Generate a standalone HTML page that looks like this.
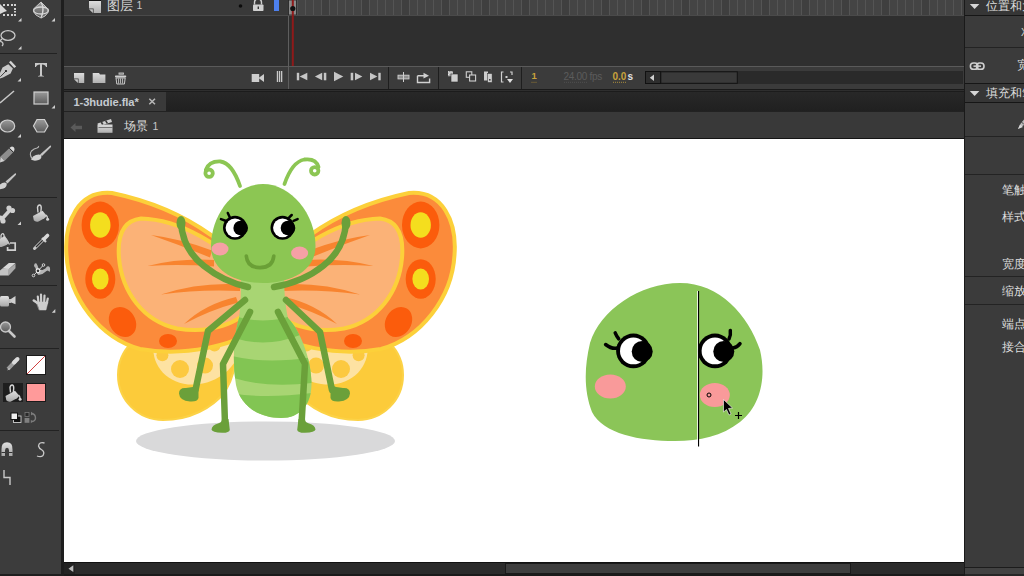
<!DOCTYPE html>
<html><head><meta charset="utf-8">
<style>
*{margin:0;padding:0;box-sizing:border-box}
html,body{width:1024px;height:576px;overflow:hidden;background:#2b2b2b;font-family:"Liberation Sans",sans-serif}
.abs{position:absolute}
.txt{position:absolute;white-space:nowrap;line-height:1}
</style></head><body>
<div class="abs" style="left:0;top:0;width:61px;height:576px;background:#3c3c3c"></div>
<div class="abs" style="left:61px;top:0;width:3px;height:576px;background:#1e1e1e"></div><div class="abs" style="left:0;top:574px;width:61px;height:2px;background:#1e1e1e"></div>
<svg class="abs" style="left:0;top:0" width="61" height="576" viewBox="0 0 61 576">
<defs>
<linearGradient id="ig" x1="0" y1="0" x2="0" y2="1"><stop offset="0" stop-color="#e0e0e0"/><stop offset="1" stop-color="#a8a8a8"/></linearGradient>
<linearGradient id="ig2" x1="0" y1="0" x2="0" y2="1"><stop offset="0" stop-color="#9a9a9a"/><stop offset="1" stop-color="#5c5c5c"/></linearGradient>
</defs>
<g fill="#cfcfcf">
<!-- tiny corner triangles -->
<path d="M21.5,18 L21.5,21.5 L18,21.5Z"/><path d="M55,18 L55,21.5 L51.5,21.5Z"/>
<path d="M21.5,46 L21.5,49.5 L18,49.5Z"/>
<path d="M21,78 L21,81.5 L17.5,81.5Z"/><path d="M55,105 L55,108.5 L51.5,108.5Z"/>
<path d="M21,134 L21,137.5 L17.5,137.5Z"/>
<path d="M21,221.5 L21,225 L17.5,225Z"/><path d="M55.3,309 L55.3,312.8 L51.8,312.8Z"/>
</g>
<!-- separators -->
<rect x="0" y="53" width="57" height="1" fill="#222"/>
<rect x="0" y="197" width="57" height="1" fill="#222"/>
<rect x="0" y="285" width="57" height="1" fill="#222"/>
<rect x="0" y="348" width="59" height="1" fill="#222"/>
<rect x="0" y="430" width="59" height="1" fill="#222"/>
<!-- selection tool -->
<path d="M0,4 L7,11 L4,12 L0,14Z" fill="#d8d8d8"/>
<g fill="#d0d0d0"><rect x="3" y="4" width="2" height="2"/><rect x="7" y="4" width="2" height="2"/><rect x="11" y="4" width="2" height="2"/><rect x="14" y="4" width="2" height="2"/>
<rect x="3" y="14" width="2" height="2"/><rect x="7" y="14" width="2" height="2"/><rect x="11" y="14" width="2" height="2"/><rect x="14" y="14" width="2" height="2"/>
<rect x="14" y="8" width="2" height="2"/><rect x="14" y="11" width="2" height="1.5"/></g>
<!-- 3D rotation -->
<path d="M41,2 L48,9 Q49,13 45,16 L41,18 L36,15 Q33,12 33.5,9Z" fill="url(#ig2)"/>
<ellipse cx="41" cy="10.5" rx="7.5" ry="3.5" fill="none" stroke="#d8d8d8" stroke-width="1.3"/>
<path d="M41,2 Q45,9 41,18" fill="none" stroke="#d8d8d8" stroke-width="1.3"/>
<path d="M41,2 L48,9 Q49,13 45,16 L41,18 L36,15 Q33,12 33.5,9Z" fill="none" stroke="#c8c8c8" stroke-width="1"/>
<!-- lasso -->
<ellipse cx="8" cy="35.5" rx="7" ry="4.8" fill="none" stroke="#c8c8c8" stroke-width="1.3"/>
<path d="M2,39 Q-1,41 2,42 Q4,44 2,46" fill="none" stroke="#c8c8c8" stroke-width="1.3"/>
<!-- pen -->
<path d="M9,62.2 L10.8,60.8 L16.2,66.4 L14.2,68Z" fill="#d4d4d4"/>
<path d="M8.3,64.3 L12.9,68.5 L10.6,73.5 L3,77.5 L0,78.5 V73 L2.5,67.5Z" fill="#c8c8c8"/>
<circle cx="6" cy="71" r="1.1" fill="#1e1e1e"/>
<path d="M6,71 L0.3,76.8" stroke="#1e1e1e" stroke-width="0.8"/>
<!-- T -->
<path d="M35,63 H47 V67 H46 Q45.5,64.5 42,64.5 V75 Q42,75.8 44,76 V76.5 H38 V76 Q40,75.8 40,75 V64.5 Q36.5,64.5 36,67 H35Z" fill="#c8c8c8"/>
<!-- line -->
<path d="M0,103 L14,91" stroke="#c8c8c8" stroke-width="1.5"/>
<!-- rect -->
<rect x="34" y="92" width="14" height="12" fill="url(#ig2)" stroke="#d0d0d0" stroke-width="1.2"/>
<!-- oval -->
<ellipse cx="7.5" cy="126" rx="7.2" ry="6" fill="url(#ig2)" stroke="#d0d0d0" stroke-width="1.2"/>
<!-- polygon -->
<path d="M37,119.5 H44.5 L48,126 L44.5,132 H37 L33.5,126Z" fill="url(#ig2)" stroke="#d0d0d0" stroke-width="1.2"/>
<!-- pencil -->
<path d="M0.5,156.5 L9.5,148 L13.5,152 L4.5,161 Z" fill="#8e8e8e"/>
<path d="M9.5,148 Q11.5,145.5 13.5,147 Q15.5,149 13.5,152Z" fill="#dadada"/>
<path d="M9.3,148.3 L13.3,152.2" stroke="#222" stroke-width="0.9"/>
<path d="M0.5,156.5 L4.5,161 L0,162.5Z" fill="#cfcfcf"/>
<!-- brush curvy -->
<path d="M40,154.5 L50.2,145.6 Q51.5,145.6 51,147 L42,156Z" fill="#c4c4c4"/>
<path d="M33,156.5 Q37.5,153.5 41,155 Q42.5,158.5 38.5,160 Q34,161.5 31,159.5Z" fill="#d0d0d0"/>
<path d="M32,158.5 Q29,154 31.5,151 Q34,148.5 37,148 Q39,147.3 38.5,146" fill="none" stroke="#b4b4b4" stroke-width="1.1"/>
<!-- paint brush -->
<path d="M5.5,181.5 L15.2,173.3 Q16.5,173.3 16,174.7 L7.5,183.5Z" fill="#c4c4c4"/>
<path d="M0,184.5 Q3.5,181.5 6.5,183 Q7.5,186.5 3.5,188.5 L0,189.3Z" fill="#d0d0d0"/>
<!-- bone -->
<path d="M2,219 L10,210" stroke="#cfcfcf" stroke-width="3.5"/>
<circle cx="9" cy="208" r="2.6" fill="#cfcfcf"/><circle cx="12.5" cy="210.5" r="2.6" fill="#cfcfcf"/>
<circle cx="0.5" cy="218" r="2.6" fill="#cfcfcf"/><circle cx="3" cy="221" r="2.6" fill="#cfcfcf"/>
<!-- paint bucket -->
<g id="bkt">
<path d="M33,216 L42.5,210.8 L46.5,215.5 Q46.3,217 44.5,218.3 L38.5,221.5 Q35.5,222.3 33.8,220.3Z" fill="url(#ig)"/>
<path d="M38,212.5 L37.5,207.5 Q38,204.8 39.8,205 Q41.5,205.5 41.2,208.5 L40.8,212.5" fill="none" stroke="#d4d4d4" stroke-width="1.4"/>
<path d="M46,215 Q47.6,216.5 47.5,218.5" fill="none" stroke="#cfcfcf" stroke-width="1.3"/>
<circle cx="47.6" cy="219.3" r="1.5" fill="#d4d4d4"/>
</g>
<!-- ink bottle -->
<path d="M0,238.5 L5,236 L8.8,242.5 Q8,244 6.5,245 L1.5,247 L0,247Z" fill="url(#ig)"/>
<path d="M1,238 L1,235.5 Q1.8,233.2 3.3,233.8 Q4.5,234.8 4,237.5" fill="none" stroke="#d4d4d4" stroke-width="1.3"/>
<path d="M6,238.5 L9.5,244.5" stroke="#c8c8c8" stroke-width="1.4"/>
<path d="M10,243 H15.2 V250.2 H7.6 V247" fill="none" stroke="#d0d0d0" stroke-width="1.7"/>
<!-- eyedropper -->
<path d="M34.5,248.5 L44,239" stroke="#c8c8c8" stroke-width="3" stroke-linecap="round"/>
<path d="M36,247 L44,239" stroke="#2e2e2e" stroke-width="1.2"/>
<path d="M42,238 L46,242" stroke="#cfcfcf" stroke-width="2.2"/>
<path d="M44,239 L47.5,235.5" stroke="#d8d8d8" stroke-width="3.6" stroke-linecap="round"/>
<!-- eraser -->
<path d="M2.3,268.6 L8.8,263 H15.5 L8.8,269.2Z" fill="#d8d8d8"/>
<path d="M0,270.4 L2.3,268.6 H8.8 V275.6 H0Z" fill="#c4c4c4"/>
<path d="M8.8,269.2 L15.5,263.6 V268.3 L8.8,275.6Z" fill="#a8a8a8"/>
<!-- puppet warp -->
<path d="M34,265.5 Q34.5,262.5 36.5,263.5 Q38,266 38.5,268.5 Q40,270 42.5,270 Q46,268.5 47,266.5 Q49.5,265.5 50,268 Q50.5,270.5 49.5,272 Q48,269.5 46.5,271 Q43,274.5 38.5,275 Q36.5,274 36,270 Q35.5,267 34.5,267Z" fill="#b4b4b4"/>
<path d="M33.5,275.5 L43.5,265" stroke="#e8e8e8" stroke-width="0.9"/>
<circle cx="33.5" cy="275.5" r="1.3" fill="#3c3c3c" stroke="#eee" stroke-width="0.8"/>
<circle cx="38" cy="270.8" r="1.9" fill="#333" stroke="#f0f0f0" stroke-width="1.1"/>
<circle cx="43.5" cy="265" r="1.3" fill="#3c3c3c" stroke="#eee" stroke-width="0.8"/>
<!-- camera -->
<rect x="0" y="296" width="9" height="10.5" rx="1.5" fill="url(#ig)"/>
<rect x="8.5" y="299" width="2.5" height="4" fill="#bdbdbd"/>
<path d="M10.5,299.3 L15.5,296 V304.3 L10.5,302.3Z" fill="#cfcfcf"/>
<!-- hand -->
<g fill="#cdcdcd" stroke="#cdcdcd" stroke-linecap="round">
<path d="M37.5,303 L33.8,300.5" stroke-width="2.6"/>
<path d="M38.5,303 L37.8,296.5" stroke-width="2.2"/>
<path d="M41.2,302 L41,294.5" stroke-width="2.2"/>
<path d="M44.2,302 L44.5,295.5" stroke-width="2.2"/>
<path d="M46.8,303 L47.8,298.5" stroke-width="2.2"/>
<path d="M36.5,302 H48 L46,310 H39.5Z" stroke-width="0.5"/>
</g>
<!-- zoom -->
<circle cx="5.5" cy="327" r="5" fill="url(#ig2)" stroke="#c8c8c8" stroke-width="1.3"/>
<path d="M9,331 L14.5,336.5" stroke="#c8c8c8" stroke-width="2.6" stroke-linecap="round"/>
<!-- stroke color -->
<path d="M8,369 L15.5,361" stroke="#9c9c9c" stroke-width="4"/>
<path d="M14,362.5 L17.5,359" stroke="#dcdcdc" stroke-width="4" stroke-linecap="round"/>
<path d="M7,370.5 L9,368 L10,369Z" fill="#d0d0d0"/>
<rect x="26" y="355" width="20" height="20" fill="#1a1a1a"/>
<rect x="27" y="356" width="18" height="18" fill="#fff"/>
<path d="M27,374 L45,356" stroke="#d04040" stroke-width="1"/>
<!-- fill color -->
<rect x="3" y="383" width="20" height="19" fill="#1e1e1e"/>
<use href="#bkt" transform="translate(-27.5,180)"/>
<rect x="26" y="383" width="20" height="19" fill="#1a1a1a"/>
<rect x="27" y="384" width="18" height="17" fill="#ff9a9a"/>
<!-- default / swap -->
<rect x="13.5" y="416" width="7.5" height="6.5" fill="#111" stroke="#cfcfcf" stroke-width="0.9"/>
<rect x="11" y="413" width="6.5" height="6.5" fill="#eee" stroke="#111" stroke-width="1"/>
<rect x="25" y="412.5" width="4" height="4" fill="#2a2a2a" stroke="#777" stroke-width="0.8"/>
<rect x="24.6" y="418" width="4.8" height="4.8" fill="#808080"/>
<path d="M31.5,413.5 Q35.5,414 35.5,418 Q35.5,421 32,421.5" fill="none" stroke="#7c7c7c" stroke-width="1.4"/>
<path d="M31,411.8 L33.5,413.5 L31,415.5Z M30.8,419.8 L33,421.5 L30.8,423.3Z" fill="#7c7c7c"/>
<!-- magnet -->
<path d="M1.5,456 V449.5 Q1.2,442.3 7,442.3 Q12.8,442.3 12.5,449.5 V456 H9 V450.5 Q9,447.8 7,447.8 Q5,447.8 5,450.5 V456Z" fill="url(#ig)"/>
<rect x="1.5" y="452" width="3.5" height="1" fill="#333"/><rect x="9" y="452" width="3.5" height="1" fill="#333"/>
<!-- S -->
<path d="M44.5,443 Q39,441.5 38.5,446 Q39,448.5 42,450 Q45,452 43,455.5 Q41,457.5 37,456" fill="none" stroke="#c8c8c8" stroke-width="1.3"/>
<!-- step -->
<path d="M4,470 V477.5 H10 V485" fill="none" stroke="#c8c8c8" stroke-width="1.4"/>
</svg>
<!-- timeline -->
<div class="abs" style="left:64px;top:0;width:900px;height:89px;background:#2f2f2f"></div>
<div class="abs" style="left:64px;top:0;width:900px;height:15px;background:#393939"></div>

<div class="abs" style="left:64px;top:66px;width:900px;height:1px;background:#5a5a5a"></div>
<div class="abs" style="left:64px;top:67px;width:900px;height:22px;background:#3b3b3b"></div>
<div class="abs" style="left:64px;top:89px;width:900px;height:1px;background:#1a1a1a"></div>
<div class="abs" style="left:64px;top:90px;width:900px;height:1px;background:#2e2e2e"></div><div class="abs" style="left:64px;top:91px;width:900px;height:1px;background:#1c1c1c"></div>
<!-- tab bar -->
<div class="abs" style="left:64px;top:92px;width:900px;height:19px;background:linear-gradient(#282828,#202020)"></div>
<div class="abs" style="left:64px;top:92px;width:102px;height:19px;background:#3a3a3a"></div>
<div class="abs" style="left:64px;top:111px;width:900px;height:1px;background:#222"></div>
<!-- scene bar -->
<div class="abs" style="left:64px;top:112px;width:900px;height:26px;background:#393939"></div>
<div class="abs" style="left:64px;top:138px;width:900px;height:1px;background:#141414"></div>
<!-- stage -->
<div class="abs" style="left:64px;top:139px;width:900px;height:423px;background:#fff"></div>
<!-- bottom scroll -->
<div class="abs" style="left:64px;top:562px;width:900px;height:12px;background:#2b2b2b"></div>
<div class="abs" style="left:64px;top:562px;width:900px;height:1px;background:#121212"></div>
<div class="abs" style="left:64px;top:563px;width:11px;height:11px;background:#232323"></div>
<div class="abs" style="left:64px;top:574px;width:900px;height:2px;background:#1a1a1a"></div>
<div class="abs" style="left:505px;top:563px;width:346px;height:11px;background:#3e3e3e;border:1px solid #1a1a1a"></div>
<svg class="abs" style="left:64px;top:563px" width="12" height="12"><path d="M4.5,5.8 L9.3,2.3 V9.1Z" fill="#bdbdbd"/></svg>
<svg class="abs" style="left:64px;top:139px" width="900" height="423" viewBox="64 139 900 423">
<!-- shadow -->
<ellipse cx="265.5" cy="441" rx="129.5" ry="19.5" fill="#d9d9da"/>
<!-- lower wings -->
<g id="lw">
<path d="M236,345 C222,332 190,330 163,330 C138,330 118,350 118,375 C118,400 138,420 163,420 C190,420 212,408 225,392 C232,380 239,360 236,345Z" fill="#fccb3a" stroke="#fcd246" stroke-width="2"/>
<path d="M240,336 C212,334 176,336 154,342 C150,362 164,382 188,384.5 C212,386 234,372 240,350Z" fill="#fde2a2"/>
<circle cx="180" cy="369" r="9" fill="#fcc940"/>
<circle cx="205" cy="365.6" r="8" fill="#fcc940"/>
<circle cx="162.4" cy="355.2" r="6" fill="#fcc940"/>
<circle cx="214.5" cy="345.6" r="6" fill="#fcc940"/>
</g>
<use href="#lw" transform="translate(521,0) scale(-1,1)"/>
<!-- upper wings -->
<g id="uw">
<path d="M252,300 C240,265 228,248 211,235 C190,220 160,203 112,193 C78,190 64,222 66.5,255 C69,298 100,338 140,349 C185,357 235,345 252,330Z" fill="#fb8b3b" stroke="#fcd03a" stroke-width="4"/>
<path d="M250,274 C238,262 222,248 200,236 C180,225 160,219 141,218.5 C120,221 117.5,240 119,258 C122,292 143,321 177,328.5 C210,334 240,324 252,305Z" fill="#fbb277" stroke="#fcd03a" stroke-width="4"/>
<ellipse cx="100.3" cy="225" rx="18.7" ry="23.4" fill="#fb5c0c"/>
<ellipse cx="100.3" cy="225" rx="10.2" ry="12.7" fill="#f4de1e"/>
<ellipse cx="100.3" cy="279" rx="15" ry="19.8" fill="#fb5c0c"/>
<ellipse cx="100.3" cy="279" rx="8.3" ry="10.5" fill="#f4de1e"/>
<ellipse cx="122.5" cy="322" rx="12.8" ry="15.8" fill="#fb5c0c" transform="rotate(-32 122.5 322)"/>
<ellipse cx="168" cy="341" rx="9" ry="7" fill="#fb5c0c"/>
<g fill="#f8842f">
<path d="M151,235 Q182,239 212,250.5 L210,257.5 Q180,245 151,235Z"/>
<path d="M147.5,266 Q180,258 214,260 L214,266.5 Q180,264 147.5,266Z"/>
<path d="M161,294.5 Q200,282 240,284.5 L240,291 Q200,289 161,294.5Z"/>
<path d="M184,324 Q205,304 236,297 L238,302.5 Q210,310 184,324Z"/>
</g>
</g>
<use href="#uw" transform="translate(521,0) scale(-1,1)"/>
<!-- abdomen -->
<defs><clipPath id="abd"><path d="M241,268 H284 C284,290 285,305 288,318 C300,330 312,360 311.5,385 C311,405 300,418 281,418 C258,418 240,405 236,385 C232,360 234,335 239,318 C241,305 241,290 241,268Z"/></clipPath></defs>
<g clip-path="url(#abd)">
<rect x="220" y="260" width="100" height="170" fill="#a8d573"/>
<path d="M225,313 Q263,328 300,313 L300,335 Q263,350 225,335Z" fill="#82c553"/>
<path d="M225,354 Q263,366 320,356 L320,382 Q263,390 225,375Z" fill="#82c553"/>
<path d="M225,392 Q263,400 320,392 L320,430 H225Z" fill="#82c553"/>
</g>
<!-- legs -->
<g fill="none" stroke="#6ba03a" stroke-width="6.5" stroke-linecap="round" stroke-linejoin="round">
<path d="M245,300 L208,331 L195.5,390"/>
<path d="M250,312 L223,364 L225,424"/>
<path d="M278,312 L305,364 L301.5,424"/>
<path d="M286,300 L320,332 L332,390"/>
<!-- arms -->
<path d="M181,221 Q182,249 204,266 Q224,282 248,287"/>
<path d="M346,221 Q345,249 323,266 Q303,282 274,287"/>
</g>
<g fill="#6ba03a">
<path id="fo" d="M198.5,385 L198.5,398 Q197.5,402 190,401.5 Q179.5,400.5 179,393.5 Q179,387.5 186,388 Q192,388 198.5,385Z"/>
<path id="fi" d="M228.5,419 L229.8,430 Q229,433 222,432.8 Q212,432.5 211.5,429.5 Q212,425 218,423.5 Q222,422.5 222,419Z"/>
<use href="#fo" transform="translate(529,0) scale(-1,1)"/>
<use href="#fi" transform="translate(527,0) scale(-1,1)"/>
<ellipse cx="181" cy="223" rx="4.5" ry="7"/>
<ellipse cx="346" cy="223" rx="4.5" ry="7"/>
</g>
<!-- antennae -->
<g fill="none" stroke="#8cc653" stroke-width="3.8" stroke-linecap="round">
<path d="M240,186 Q232,163 220.5,161.5 Q209,161 205.8,170"/>
<circle cx="209.1" cy="173.2" r="3.7"/>
<path d="M284.5,184 Q292,162 304.3,159.5 Q316,158 318.5,167"/>
<circle cx="314.7" cy="170.8" r="3.7"/>
</g>
<!-- head -->
<path d="M263,184 C291,184 315.5,214 315.5,246 C315.5,270 292,283 263,283 C234,283 211,270 211,246 C211,214 235,184 263,184Z" fill="#8cc653"/>
<!-- eyes -->
<g>
<circle cx="235" cy="227.8" r="12" fill="#000"/>
<circle cx="235" cy="227.8" r="9.4" fill="#fff"/>
<circle cx="240.7" cy="228" r="7.3" fill="#000"/>
<circle cx="282.5" cy="227.8" r="12" fill="#000"/>
<circle cx="282.5" cy="227.8" r="9.4" fill="#fff"/>
<circle cx="288" cy="228" r="7.3" fill="#000"/>
</g>
<g stroke="#000" stroke-width="2.5" stroke-linecap="round" fill="none">
<path d="M230,217.7 L227.8,213"/><path d="M226.8,221.2 L221,219.1"/>
<path d="M289,217.7 L291.7,215"/><path d="M293.5,220.8 L297.6,219.1"/>
</g>
<ellipse cx="220" cy="249" rx="8.5" ry="6.5" fill="#f6a0a5"/>
<ellipse cx="299.6" cy="253" rx="8.5" ry="6.5" fill="#f6a0a5"/>
<path d="M246.3,256 C247,264.5 252.5,267.6 260,267.6 C267.5,267.6 273,264.5 273.8,256" fill="none" stroke="#6a9f36" stroke-width="3.6" stroke-linecap="round"/>

<!-- green blob -->
<path d="M680,283 C720,283 748,315 760,350 C766,375 762,405 740,422 C722,436 700,441 675,441 C640,441 603,434 592,412 C584,392 584,368 590,343 C600,310 640,283 680,283Z" fill="#8bc558"/>
<g>
<circle cx="633.4" cy="350.9" r="17.3" fill="#000"/>
<circle cx="633.4" cy="350.9" r="13.4" fill="#fff"/>
<circle cx="642.2" cy="351.5" r="10.5" fill="#000"/>
<circle cx="715" cy="350.9" r="17.3" fill="#000"/>
<circle cx="715" cy="350.9" r="13.4" fill="#fff"/>
<circle cx="723.8" cy="351.5" r="10.5" fill="#000"/>
</g>
<g stroke="#000" stroke-width="3.5" stroke-linecap="round" fill="none">
<path d="M618.7,338.9 Q616.5,336 615.2,332.8"/><path d="M617.4,348 Q612,349.5 605.6,344.5"/>
<path d="M729,339 Q731,335 730.3,330.5"/><path d="M733,348 Q737,347.5 740,343.6"/>
</g>
<ellipse cx="610.3" cy="386.4" rx="15.5" ry="12" fill="#f99a9a"/>
<ellipse cx="714.8" cy="395" rx="15" ry="12" fill="#f99a9a"/>
<rect x="697" y="291" width="1" height="155.5" fill="#fff" opacity="0.8"/><rect x="698" y="291" width="1.1" height="155.5" fill="#000"/>
<circle cx="709" cy="395" r="2" fill="none" stroke="#000" stroke-width="1"/>
<path d="M723.5,399.5 L723.5,412 L726.5,409.5 L729,415 L731,414 L728.5,408.5 L732.5,408Z" fill="#000" stroke="#fff" stroke-width="0.6"/>
<path d="M735,415.5 H742 M738.5,412 V419" stroke="#000" stroke-width="1.2"/>
</svg>
<svg class="abs" style="left:0;top:0" width="964" height="138" viewBox="0 0 964 138"><defs><linearGradient id="tg" x1="0" y1="0" x2="0" y2="1"><stop offset="0" stop-color="#dcdcdc"/><stop offset="1" stop-color="#b0b0b0"/></linearGradient></defs>
<!-- frames -->
<rect x="288" y="0" width="676" height="15" fill="#444"/>
<rect x="321" y="0" width="8" height="15" fill="#3f3f3f"/><rect x="361" y="0" width="8" height="15" fill="#3f3f3f"/><rect x="401" y="0" width="8" height="15" fill="#3f3f3f"/><rect x="441" y="0" width="8" height="15" fill="#3f3f3f"/><rect x="481" y="0" width="8" height="15" fill="#3f3f3f"/><rect x="521" y="0" width="8" height="15" fill="#3f3f3f"/><rect x="561" y="0" width="8" height="15" fill="#3f3f3f"/><rect x="601" y="0" width="8" height="15" fill="#3f3f3f"/><rect x="641" y="0" width="8" height="15" fill="#3f3f3f"/><rect x="681" y="0" width="8" height="15" fill="#3f3f3f"/><rect x="721" y="0" width="8" height="15" fill="#3f3f3f"/><rect x="761" y="0" width="8" height="15" fill="#3f3f3f"/><rect x="801" y="0" width="8" height="15" fill="#3f3f3f"/><rect x="841" y="0" width="8" height="15" fill="#3f3f3f"/><rect x="881" y="0" width="8" height="15" fill="#3f3f3f"/><rect x="921" y="0" width="8" height="15" fill="#3f3f3f"/><rect x="961" y="0" width="8" height="15" fill="#3f3f3f"/>
<rect x="297" y="0" width="1" height="15" fill="#545454"/><rect x="305" y="0" width="1" height="15" fill="#545454"/><rect x="313" y="0" width="1" height="15" fill="#545454"/><rect x="321" y="0" width="1" height="15" fill="#545454"/><rect x="329" y="0" width="1" height="15" fill="#545454"/><rect x="337" y="0" width="1" height="15" fill="#545454"/><rect x="345" y="0" width="1" height="15" fill="#545454"/><rect x="353" y="0" width="1" height="15" fill="#545454"/><rect x="361" y="0" width="1" height="15" fill="#545454"/><rect x="369" y="0" width="1" height="15" fill="#545454"/><rect x="377" y="0" width="1" height="15" fill="#545454"/><rect x="385" y="0" width="1" height="15" fill="#545454"/><rect x="393" y="0" width="1" height="15" fill="#545454"/><rect x="401" y="0" width="1" height="15" fill="#545454"/><rect x="409" y="0" width="1" height="15" fill="#545454"/><rect x="417" y="0" width="1" height="15" fill="#545454"/><rect x="425" y="0" width="1" height="15" fill="#545454"/><rect x="433" y="0" width="1" height="15" fill="#545454"/><rect x="441" y="0" width="1" height="15" fill="#545454"/><rect x="449" y="0" width="1" height="15" fill="#545454"/><rect x="457" y="0" width="1" height="15" fill="#545454"/><rect x="465" y="0" width="1" height="15" fill="#545454"/><rect x="473" y="0" width="1" height="15" fill="#545454"/><rect x="481" y="0" width="1" height="15" fill="#545454"/><rect x="489" y="0" width="1" height="15" fill="#545454"/><rect x="497" y="0" width="1" height="15" fill="#545454"/><rect x="505" y="0" width="1" height="15" fill="#545454"/><rect x="513" y="0" width="1" height="15" fill="#545454"/><rect x="521" y="0" width="1" height="15" fill="#545454"/><rect x="529" y="0" width="1" height="15" fill="#545454"/><rect x="537" y="0" width="1" height="15" fill="#545454"/><rect x="545" y="0" width="1" height="15" fill="#545454"/><rect x="553" y="0" width="1" height="15" fill="#545454"/><rect x="561" y="0" width="1" height="15" fill="#545454"/><rect x="569" y="0" width="1" height="15" fill="#545454"/><rect x="577" y="0" width="1" height="15" fill="#545454"/><rect x="585" y="0" width="1" height="15" fill="#545454"/><rect x="593" y="0" width="1" height="15" fill="#545454"/><rect x="601" y="0" width="1" height="15" fill="#545454"/><rect x="609" y="0" width="1" height="15" fill="#545454"/><rect x="617" y="0" width="1" height="15" fill="#545454"/><rect x="625" y="0" width="1" height="15" fill="#545454"/><rect x="633" y="0" width="1" height="15" fill="#545454"/><rect x="641" y="0" width="1" height="15" fill="#545454"/><rect x="649" y="0" width="1" height="15" fill="#545454"/><rect x="657" y="0" width="1" height="15" fill="#545454"/><rect x="665" y="0" width="1" height="15" fill="#545454"/><rect x="673" y="0" width="1" height="15" fill="#545454"/><rect x="681" y="0" width="1" height="15" fill="#545454"/><rect x="689" y="0" width="1" height="15" fill="#545454"/><rect x="697" y="0" width="1" height="15" fill="#545454"/><rect x="705" y="0" width="1" height="15" fill="#545454"/><rect x="713" y="0" width="1" height="15" fill="#545454"/><rect x="721" y="0" width="1" height="15" fill="#545454"/><rect x="729" y="0" width="1" height="15" fill="#545454"/><rect x="737" y="0" width="1" height="15" fill="#545454"/><rect x="745" y="0" width="1" height="15" fill="#545454"/><rect x="753" y="0" width="1" height="15" fill="#545454"/><rect x="761" y="0" width="1" height="15" fill="#545454"/><rect x="769" y="0" width="1" height="15" fill="#545454"/><rect x="777" y="0" width="1" height="15" fill="#545454"/><rect x="785" y="0" width="1" height="15" fill="#545454"/><rect x="793" y="0" width="1" height="15" fill="#545454"/><rect x="801" y="0" width="1" height="15" fill="#545454"/><rect x="809" y="0" width="1" height="15" fill="#545454"/><rect x="817" y="0" width="1" height="15" fill="#545454"/><rect x="825" y="0" width="1" height="15" fill="#545454"/><rect x="833" y="0" width="1" height="15" fill="#545454"/><rect x="841" y="0" width="1" height="15" fill="#545454"/><rect x="849" y="0" width="1" height="15" fill="#545454"/><rect x="857" y="0" width="1" height="15" fill="#545454"/><rect x="865" y="0" width="1" height="15" fill="#545454"/><rect x="873" y="0" width="1" height="15" fill="#545454"/><rect x="881" y="0" width="1" height="15" fill="#545454"/><rect x="889" y="0" width="1" height="15" fill="#545454"/><rect x="897" y="0" width="1" height="15" fill="#545454"/><rect x="905" y="0" width="1" height="15" fill="#545454"/><rect x="913" y="0" width="1" height="15" fill="#545454"/><rect x="921" y="0" width="1" height="15" fill="#545454"/><rect x="929" y="0" width="1" height="15" fill="#545454"/><rect x="937" y="0" width="1" height="15" fill="#545454"/><rect x="945" y="0" width="1" height="15" fill="#545454"/><rect x="953" y="0" width="1" height="15" fill="#545454"/><rect x="961" y="0" width="1" height="15" fill="#545454"/><rect x="969" y="0" width="1" height="15" fill="#545454"/>
<rect x="288.5" y="0" width="8" height="15" fill="#8a8a8a" stroke="#222" stroke-width="0.8"/>
<rect x="64" y="15" width="900" height="1" fill="#4a4a4a"/>
<rect x="288" y="16" width="1" height="73" fill="#5e5e5e"/>
<rect x="291.8" y="0" width="2" height="66" fill="#8e1a1a"/>
<circle cx="292.8" cy="8.5" r="2.6" fill="#111"/>
<!-- layer row -->
<path d="M89,1 H101 V13 H93.6 V8.6 H89Z" fill="url(#tg)"/><path d="M89,9.3 H92.9 V13Z" fill="#c4c4c4"/><rect x="89" y="0" width="12" height="1" fill="#111"/>

<circle cx="240.5" cy="6" r="1.8" fill="#0c0c0c"/>
<path d="M254.5,4.5 V2.5 Q254.5,-1 258,-1 Q261.5,-1 261.5,2.5 V4.5" fill="none" stroke="#d0d0d0" stroke-width="1.4"/>
<rect x="253" y="4.5" width="10.5" height="6.5" rx="0.8" fill="#d0d0d0"/>
<rect x="257.6" y="6.5" width="1.4" height="2.5" fill="#333"/>
<rect x="274" y="0" width="5" height="11" fill="#4d80ee"/>
<!-- bottom toolbar icons -->
<path d="M74,73 H84.2 V83.1 H78.6 V78.6 H74Z" fill="url(#tg)"/><path d="M74,79.3 H77.9 V83.1Z" fill="#c4c4c4"/>
<path d="M92.7,73 H99 L100,74.6 H105.4 V83.1 H92.7Z" fill="url(#tg)"/>
<rect x="119" y="73" width="4.5" height="1.2" fill="none" stroke="#c8c8c8" stroke-width="0.9"/>
<rect x="115" y="75.4" width="11.2" height="2" rx="0.6" fill="#cfcfcf"/>
<path d="M116,78 H125.2 L124.4,84 H116.8Z" fill="none" stroke="#c8c8c8" stroke-width="1"/>
<path d="M118.6,78.5 V83.5 M120.6,78.5 V83.5 M122.6,78.5 V83.5" stroke="#c8c8c8" stroke-width="0.9"/>
<!-- camera + ||| -->
<rect x="251.7" y="74" width="7.5" height="8" fill="#cdcdcd"/>
<path d="M258.5,78 L264,74 V82Z" fill="#cdcdcd"/>
<rect x="276.8" y="71" width="1.3" height="11" fill="#c8c8c8"/>
<rect x="278.9" y="71" width="1.3" height="11" fill="#c8c8c8"/>
<rect x="281" y="71" width="1.3" height="11" fill="#c8c8c8"/>
<!-- playback -->
<g fill="#c6c6c6">
<rect x="296.8" y="72.8" width="2.4" height="7.5"/><path d="M299.6,76.5 L307.3,72.8 V80.3Z"/>
<path d="M314.9,76.5 L322.2,72.8 V80.3Z"/><rect x="323.8" y="72.8" width="2.5" height="7.5"/>
<path d="M334,71.8 L343.3,76.5 L334,81.2Z"/>
<rect x="350.7" y="72.8" width="2.5" height="7.5"/><path d="M355,72.8 L362.4,76.5 L355,80.3Z"/>
<path d="M370,72.8 L377.4,76.5 L370,80.3Z"/><rect x="378.3" y="72.8" width="2.4" height="7.5"/>
</g>
<rect x="388" y="67" width="1" height="22" fill="#1e1e1e"/>
<rect x="438" y="67" width="1" height="22" fill="#1e1e1e"/>
<rect x="521" y="67" width="1" height="22" fill="#1e1e1e"/>
<!-- sync / loop -->
<rect x="398" y="75.2" width="11" height="3.7" fill="#8f8f8f" stroke="#d0d0d0" stroke-width="0.9"/>
<rect x="403" y="72" width="1" height="10" fill="#d0d0d0"/>
<path d="M417.5,75.8 H424 M417.5,75.8 V82.5 H429.6 V78.5" fill="none" stroke="#d0d0d0" stroke-width="1.4"/>
<path d="M423.5,72.8 L429,75.8 L423.5,78.5Z" fill="#d0d0d0"/>
<!-- onion skin icons -->
<rect x="448" y="71.3" width="5" height="5" fill="#aaa"/>
<rect x="448" y="71.3" width="1.2" height="1.2" fill="#eee"/><rect x="450.4" y="71.3" width="1.2" height="1.2" fill="#eee"/><rect x="449.2" y="72.5" width="1.2" height="1.2" fill="#eee"/><rect x="448" y="73.7" width="1.2" height="1.2" fill="#eee"/><rect x="451.6" y="72.5" width="1.2" height="1.2" fill="#eee"/>
<rect x="451" y="74" width="7" height="8" fill="#cfcfcf" stroke="#2c2c2c" stroke-width="0.6"/>
<rect x="466.3" y="71.8" width="5.5" height="5.5" fill="none" stroke="#cfcfcf" stroke-width="1.1"/>
<rect x="469.6" y="75" width="6" height="6" fill="#3b3b3b" stroke="#cfcfcf" stroke-width="1.1"/>
<rect x="484" y="71.5" width="4" height="9" fill="#cfcfcf"/>
<rect x="487.6" y="73.5" width="4.5" height="9" fill="#cfcfcf" stroke="#2c2c2c" stroke-width="0.5"/>
<rect x="489" y="79" width="1.6" height="1.6" fill="#444"/>
<path d="M503.5,72 H501.5 V82 H503.5 M510,72 H512 V75" fill="none" stroke="#cfcfcf" stroke-width="1.2"/>
<rect x="505.5" y="76" width="2" height="2" fill="#cfcfcf"/>
<path d="M507,79 H513 L510,83Z" fill="#e0e0e0"/>
<!-- frame number / fps -->
<text x="531.5" y="78.5" font-family="Liberation Sans" font-weight="bold" font-size="9.5" fill="#c8a23c">1</text>
<path d="M531.5,82.3 H536.5" stroke="#b08a30" stroke-width="0.8" stroke-dasharray="1,1"/>
<text x="563.5" y="79.5" font-family="Liberation Sans" font-size="10" fill="#5c5c5c" letter-spacing="-0.3">24.00 fps</text>
<path d="M564,82.3 H588" stroke="#555" stroke-width="0.8" stroke-dasharray="1,1"/>
<text x="612.5" y="79.5" font-family="Liberation Sans" font-weight="bold" font-size="10" fill="#c8a23c">0.0</text>
<text x="627.5" y="79.5" font-family="Liberation Sans" font-weight="bold" font-size="10" fill="#e0e0e0">s</text>
<path d="M613,82.3 H626" stroke="#c8a23c" stroke-width="0.8" stroke-dasharray="1,1"/>
<!-- timeline scroll -->
<rect x="645" y="71" width="318" height="13" fill="#2a2a2a"/>
<rect x="645.5" y="71.5" width="15" height="12" fill="#2e2e2e" stroke="#111" stroke-width="1"/>
<path d="M649.8,77.7 L654,74.5 V81Z" fill="#cfcfcf"/>
<rect x="660.8" y="71.5" width="302" height="12" fill="#2a2a2a"/><rect x="660.8" y="71.8" width="76.5" height="11.5" fill="#3a3a3a" stroke="#121212" stroke-width="1"/>
<!-- tab -->
<text x="73.5" y="106" font-family="Liberation Sans" font-weight="bold" font-size="11.2" fill="#c5cad0" letter-spacing="-0.1">1-3hudie.fla*</text>
<path d="M149.3,98.7 L155,104.3 M155,98.7 L149.3,104.3" stroke="#b8b8b8" stroke-width="1.5"/>
<!-- scene bar -->
<path d="M70.5,127.5 L75.5,123 V125.8 H82 V129.2 H75.5 V132Z" fill="#5a5a5a"/>
<rect x="97.5" y="124.5" width="15" height="8.3" fill="url(#tg)"/>
<path d="M97.5,123.5 L111,119 L112,122 L98.5,126.3Z" fill="#cfcfcf"/>
<path d="M100.5,122.5 L102,121.5 L103.5,124 L102,124.7Z M105,121 L106.5,120.5 L108,123 L106.5,123.5Z" fill="#3a3a3a"/>
<path d="M98.5,127.5 H112.5 M98.5,128" stroke="#3a3a3a" stroke-width="0.6"/>
</svg>
<div class="txt" style="left:107px;top:-1px;font-size:13px;color:#d8d8d8">图层</div>
<div class="txt" style="left:136.5px;top:0px;font-size:10.5px;color:#c8c8c8">1</div>
<div class="txt" style="left:123.5px;top:119.5px;font-size:12px;color:#dcdcdc">场景</div>
<div class="txt" style="left:152.5px;top:121px;font-size:10.5px;color:#c8c8c8">1</div>
<svg class="abs" style="left:963px;top:0" width="61" height="576" viewBox="963 0 61 576">
<rect x="964" y="0" width="1" height="576" fill="#1a1a1a"/>
<rect x="965" y="0" width="59" height="576" fill="#3b3b3b"/>
<rect x="965" y="0" width="59" height="15" fill="#363636"/>
<rect x="965" y="15" width="59" height="1" fill="#161616"/>
<rect x="965" y="47" width="59" height="1" fill="#232323"/>
<rect x="965" y="83" width="59" height="1" fill="#161616"/>
<rect x="965" y="84" width="59" height="18" fill="#363636"/>
<rect x="965" y="102" width="59" height="1" fill="#161616"/>
<rect x="965" y="136" width="59" height="1" fill="#232323"/>
<rect x="965" y="174" width="59" height="1" fill="#232323"/>
<rect x="965" y="276" width="59" height="1" fill="#232323"/>
<rect x="965" y="304" width="59" height="1" fill="#232323"/>
<rect x="965" y="567" width="59" height="1" fill="#1c1c1c"/>
<rect x="965" y="568" width="59" height="6" fill="#424242"/>
<rect x="965" y="574" width="59" height="2" fill="#262626"/>
<path d="M969.8,4 H979.4 L974.6,9Z" fill="#d6d6d6"/>
<path d="M969.8,91 H979.4 L974.6,96Z" fill="#d6d6d6"/>
<!-- link icon -->
<rect x="970.4" y="63" width="7.5" height="6.3" rx="3.1" fill="none" stroke="#d0d0d0" stroke-width="1.6"/>
<rect x="976.5" y="63" width="7.5" height="6.3" rx="3.1" fill="none" stroke="#d0d0d0" stroke-width="1.6"/>
<rect x="973.5" y="65.4" width="7.5" height="1.5" fill="#d0d0d0"/>
<!-- pencil -->
<path d="M1018,129 L1021,123 L1024,119.5 V126.5 L1024,125Z" fill="#b8b8b8"/>
<path d="M1018,129 L1020,124.5 L1023,127Z" fill="#d8d8d8"/>
<path d="M1021.5,122 L1024,124.5" stroke="#2a2a2a" stroke-width="0.8"/>
</svg>
<div class="txt" style="left:986px;top:0px;font-size:12px;color:#dedede">位置和大小</div>
<div class="txt" style="left:1021px;top:28px;font-size:10px;color:#cfcfcf">X</div>
<div class="txt" style="left:1017px;top:59px;font-size:12px;color:#dedede">宽</div>
<div class="txt" style="left:986px;top:87px;font-size:12px;color:#dedede">填充和笔触</div>
<div class="txt" style="left:1002px;top:184px;font-size:12px;color:#dedede">笔触</div>
<div class="txt" style="left:1002px;top:211px;font-size:12px;color:#dedede">样式</div>
<div class="txt" style="left:1002px;top:258px;font-size:12px;color:#dedede">宽度</div>
<div class="txt" style="left:1002px;top:285px;font-size:12px;color:#dedede">缩放</div>
<div class="txt" style="left:1002px;top:318px;font-size:12px;color:#dedede">端点</div>
<div class="txt" style="left:1002px;top:341px;font-size:12px;color:#dedede">接合</div>
</body></html>
